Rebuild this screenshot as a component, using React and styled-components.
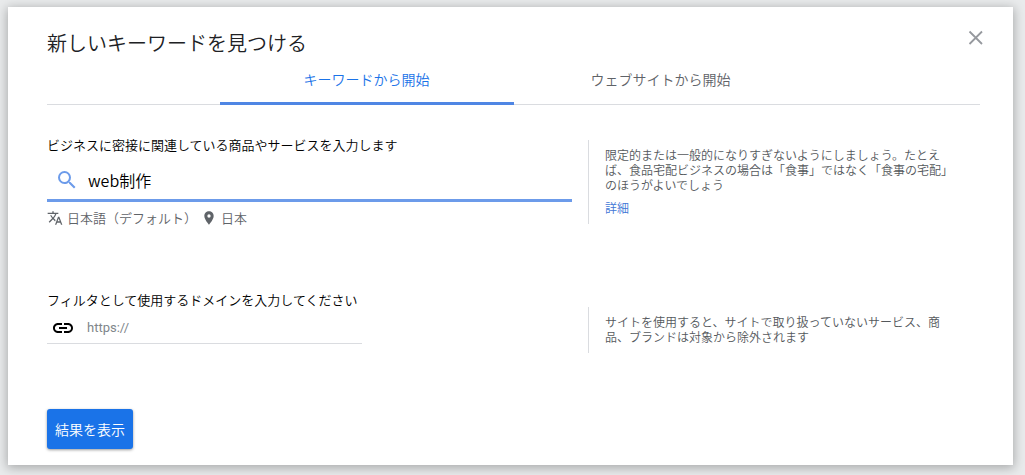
import { useState } from "react";
import styled, { createGlobalStyle, css } from "styled-components";
import { MdLink, MdLocationOn, MdSearch, MdTranslate } from "react-icons/md";

const tabs = [
  { id: "keyword", label: "キーワードから開始" },
  { id: "website", label: "ウェブサイトから開始" },
];

const App = () => {
  const [active, setActive] = useState("keyword");
  const [keyword, setKeyword] = useState("web制作");
  const [domain, setDomain] = useState("");

  return (
    <>
      <GlobalStyle />
      <Dialog>
        <Header>
          <Title>新しいキーワードを見つける</Title>
          <CloseButton type='button' aria-label='閉じる'>
            <svg width='24' height='24' viewBox='0 0 24 24' fill='none'>
              <path
                d='M5.5 5.5l12.5 12.5M18 5.5L5.5 18'
                stroke='currentColor'
                strokeWidth='1.8'
              />
            </svg>
          </CloseButton>
        </Header>

        <TabList role='tablist'>
          {tabs.map((tab) => (
            <Tab
              key={tab.id}
              type='button'
              role='tab'
              aria-selected={active === tab.id}
              $active={active === tab.id}
              onClick={() => setActive(tab.id)}
            >
              {tab.label}
            </Tab>
          ))}
        </TabList>

        <Form onSubmit={(e) => e.preventDefault()}>
          <Row>
            <Field>
              <Label htmlFor='keyword'>
                ビジネスに密接に関連している商品やサービスを入力します
              </Label>
              <SearchBox>
                <MdSearch size={24} />
                <SearchInput
                  id='keyword'
                  type='text'
                  value={keyword}
                  onChange={(e) => setKeyword(e.target.value)}
                />
              </SearchBox>
              <Targeting>
                <TargetButton type='button'>
                  <MdTranslate size={16} />
                  日本語（デフォルト）
                </TargetButton>
                <TargetButton type='button'>
                  <MdLocationOn size={16} />
                  日本
                </TargetButton>
              </Targeting>
            </Field>
            <Help>
              <p>
                限定的または一般的になりすぎないようにしましょう。たとえば、食品宅配ビジネスの場合は「食事」ではなく「食事の宅配」のほうがよいでしょう
              </p>
              <a href='#details'>詳細</a>
            </Help>
          </Row>

          <Row>
            <Field>
              <Label htmlFor='domain'>
                フィルタとして使用するドメインを入力してください
              </Label>
              <DomainBox>
                <MdLink size={24} />
                <DomainInput
                  id='domain'
                  type='text'
                  placeholder='https://'
                  value={domain}
                  onChange={(e) => setDomain(e.target.value)}
                />
              </DomainBox>
            </Field>
            <Help $short>
              <p>
                サイトを使用すると、サイトで取り扱っていないサービス、商品、ブランドは対象から除外されます
              </p>
            </Help>
          </Row>

          <SubmitButton type='submit'>結果を表示</SubmitButton>
        </Form>
      </Dialog>
    </>
  );
};

export default App;

const GlobalStyle = createGlobalStyle`
  * {
    box-sizing: border-box;
  }
  body {
    margin: 0;
    padding: 7px 12px 10px 8px;
    background: #e9ebec;
    font-family: "Noto Sans CJK JP", sans-serif;
    font-weight: 350;
  }
  button,
  input {
    font-family: inherit;
    font-weight: inherit;
    border: none;
    background: none;
    padding: 0;
    margin: 0;
  }
  button {
    cursor: pointer;
  }
  p {
    margin: 0;
  }
`;

const Dialog = styled.main`
  background: #fff;
  padding: 0 33px 16px 39px;
  box-shadow: 0 2px 10px 1px rgba(0, 0, 0, 0.28);
`;

const Header = styled.header`
  display: flex;
  justify-content: space-between;
  align-items: flex-start;
  padding-top: 19px;
  height: 50px;
`;

const Title = styled.h1`
  margin: 0;
  font-size: 20px;
  line-height: 34px;
  font-weight: 350;
  color: #202124;
`;

const CloseButton = styled.button`
  display: flex;
  margin-right: -8px;
  color: #96999e;
`;

const TabList = styled.div`
  display: flex;
  justify-content: center;
  border-bottom: 1px solid #dadce0;
`;

const Tab = styled.button`
  flex: 0 1 294px;
  height: 48px;
  padding-bottom: 1px;
  margin-bottom: -1px;
  border-bottom: 3px solid transparent;
  font-size: 14px;
  color: #5f6368;
  ${({ $active }) =>
    $active &&
    css`
      color: #1a73e8;
      border-bottom-color: #4f86e4;
    `}
`;

const Form = styled.form`
  display: flex;
  flex-direction: column;
  align-items: flex-start;
  gap: 56px;
  padding-top: 30px;
`;

const Row = styled.div`
  display: grid;
  grid-template-columns: minmax(0, 1fr) 392px;
  gap: 16px;
  width: 100%;
`;

const Field = styled.div`
  display: flex;
  flex-direction: column;
`;

const Label = styled.label`
  font-size: 13px;
  line-height: 20px;
  color: #000;
`;

const SearchBox = styled.div`
  display: flex;
  align-items: center;
  gap: 9px;
  height: 47px;
  padding: 6px 8px 0;
  border-bottom: 3px solid #6c9bea;
  color: #6c9bea;
`;

const SearchInput = styled.input`
  flex: 1;
  min-width: 0;
  font-size: 16px;
  line-height: 24px;
  color: #000;
  outline: none;
`;

const Targeting = styled.div`
  display: flex;
  gap: 4px;
  padding: 6px 0;
`;

const TargetButton = styled.button`
  display: flex;
  align-items: center;
  gap: 4px;
  font-size: 13px;
  line-height: 20px;
  color: #5f6368;
`;

const DomainBox = styled.div`
  display: flex;
  align-items: center;
  gap: 12px;
  width: 60%;
  height: 34px;
  padding: 2px 4px 0;
  border-bottom: 1px solid #dadce0;
`;

const DomainInput = styled.input`
  flex: 1;
  min-width: 0;
  font-family: Roboto, "Noto Sans CJK JP", sans-serif;
  font-size: 13px;
  font-weight: 400;
  line-height: 20px;
  outline: none;
  &::placeholder {
    color: #80868b;
    opacity: 1;
  }
`;

const Help = styled.aside`
  align-self: start;
  margin-top: ${({ $short }) => ($short ? "17px" : "5px")};
  padding: 7px 24px 9px 16px;
  border-left: 1px solid #dadce0;
  font-size: 12px;
  line-height: 15px;
  color: #54585c;
  a {
    display: block;
    margin-top: 8px;
    color: #3f76d6;
    text-decoration: none;
  }
`;

const SubmitButton = styled.button`
  height: 40px;
  padding: 0 8px;
  border-radius: 3px;
  background: #1a73e8;
  box-shadow: 0 1px 3px rgba(0, 0, 0, 0.4);
  font-size: 14px;
  color: #fff;
`;
